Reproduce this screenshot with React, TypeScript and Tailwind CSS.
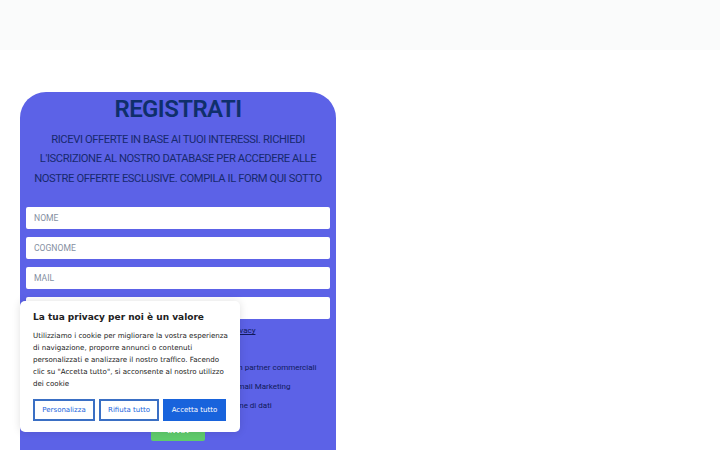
import React from 'react';

const fields = ['NOME', 'COGNOME', 'MAIL', 'TELEFONO'];

const consents = [
  'Acconsento alla comunicazione dei dati personali con partner commerciali',
  'Acconsento al trattamento dei miei dati per Email Marketing',
  'Acconsento al trattamento per profilazione di dati',
];

function CookieBanner() {
  return (
    <div
      className="absolute left-[20px] top-[301px] w-[220px] rounded-[5px] bg-white pl-[13px] pr-[7px] pt-[10px] pb-[11px] shadow-[0_0_8px_rgba(0,0,0,0.12)]"
      style={{ fontFamily: '"DejaVu Sans", sans-serif' }}
    >
      <div className="text-[9px] font-bold leading-[13px] text-[#212121]">La tua privacy per noi è un valore</div>
      <p className="mt-[6px] text-[7.1px] leading-[12px] text-[#212121]">
        Utilizziamo i cookie per migliorare la vostra esperienza di navigazione, proporre annunci o contenuti
        personalizzati e analizzare il nostro traffico. Facendo clic su "Accetta tutto", si acconsente al nostro
        utilizzo dei cookie
      </p>
      <div className="mt-[9px] flex gap-[4px]">
        <button className="h-[22px] w-[62px] border-2 border-[#3a6fc4] text-[7px] text-[#1863dc]">Personalizza</button>
        <button className="h-[22px] w-[60px] border-2 border-[#3a6fc4] text-[7px] text-[#1863dc]">Rifiuta tutto</button>
        <button className="h-[22px] w-[63px] border-2 border-[#1863dc] bg-[#1863dc] text-[7px] text-white">Accetta tutto</button>
      </div>
    </div>
  );
}

export default function App() {
  return (
    <div className="relative h-[450px] w-[720px] overflow-hidden bg-white" style={{ fontFamily: 'Roboto, sans-serif' }}>
      <div className="h-[50px] bg-[#fafbfb]" />
      <div className="pl-[20px] pt-[42px]">
        <div className="w-[316px] rounded-t-[26px] bg-[#5c62e7] px-[6px] pb-[40px] pt-[2px]">
          <h1 className="text-center text-[24px] font-semibold leading-[30px] tracking-[-0.6px] text-[#0f2f6b]">REGISTRATI</h1>
          <p className="mt-[6px] text-center text-[11.2px] leading-[19.3px] tracking-[-0.4px] text-[#17296e]">
            RICEVI OFFERTE IN BASE AI TUOI INTERESSI. RICHIEDI L'ISCRIZIONE AL NOSTRO DATABASE PER ACCEDERE ALLE
            NOSTRE OFFERTE ESCLUSIVE. COMPILA IL FORM QUI SOTTO
          </p>
          <div className="mt-[19px] flex flex-col gap-[7.5px]">
            {fields.map((f) => (
              <div
                key={f}
                className="flex h-[22.5px] items-center rounded-[2px] bg-white pl-[8px] text-[8.6px] text-[#8590a2]"
              >
                {f}
              </div>
            ))}
          </div>
          <div className="mt-[7px] text-center text-[8px] leading-[10px] text-[#101a5a]">
            Ho letto e accetto l'informativa sulla <span className="underline">privacy</span>
          </div>
          <div className="mt-[27px] flex flex-col gap-[9px] text-center text-[8px] leading-[10px] text-[#101a5a]">
            {consents.map((c) => (
              <div key={c} className="flex items-center justify-center gap-[4px]">
                <span className="inline-block h-[8px] w-[8px] rounded-[1px] border border-[#101a5a] bg-white" />
                <span>{c}</span>
              </div>
            ))}
          </div>
          <div className="mt-[10px] flex justify-center">
            <button className="h-[20px] w-[54px] rounded-[2px] bg-[#5fcb6c] text-[8px] font-bold text-white">INVIA</button>
          </div>
        </div>
      </div>
      <CookieBanner />
    </div>
  );
}
